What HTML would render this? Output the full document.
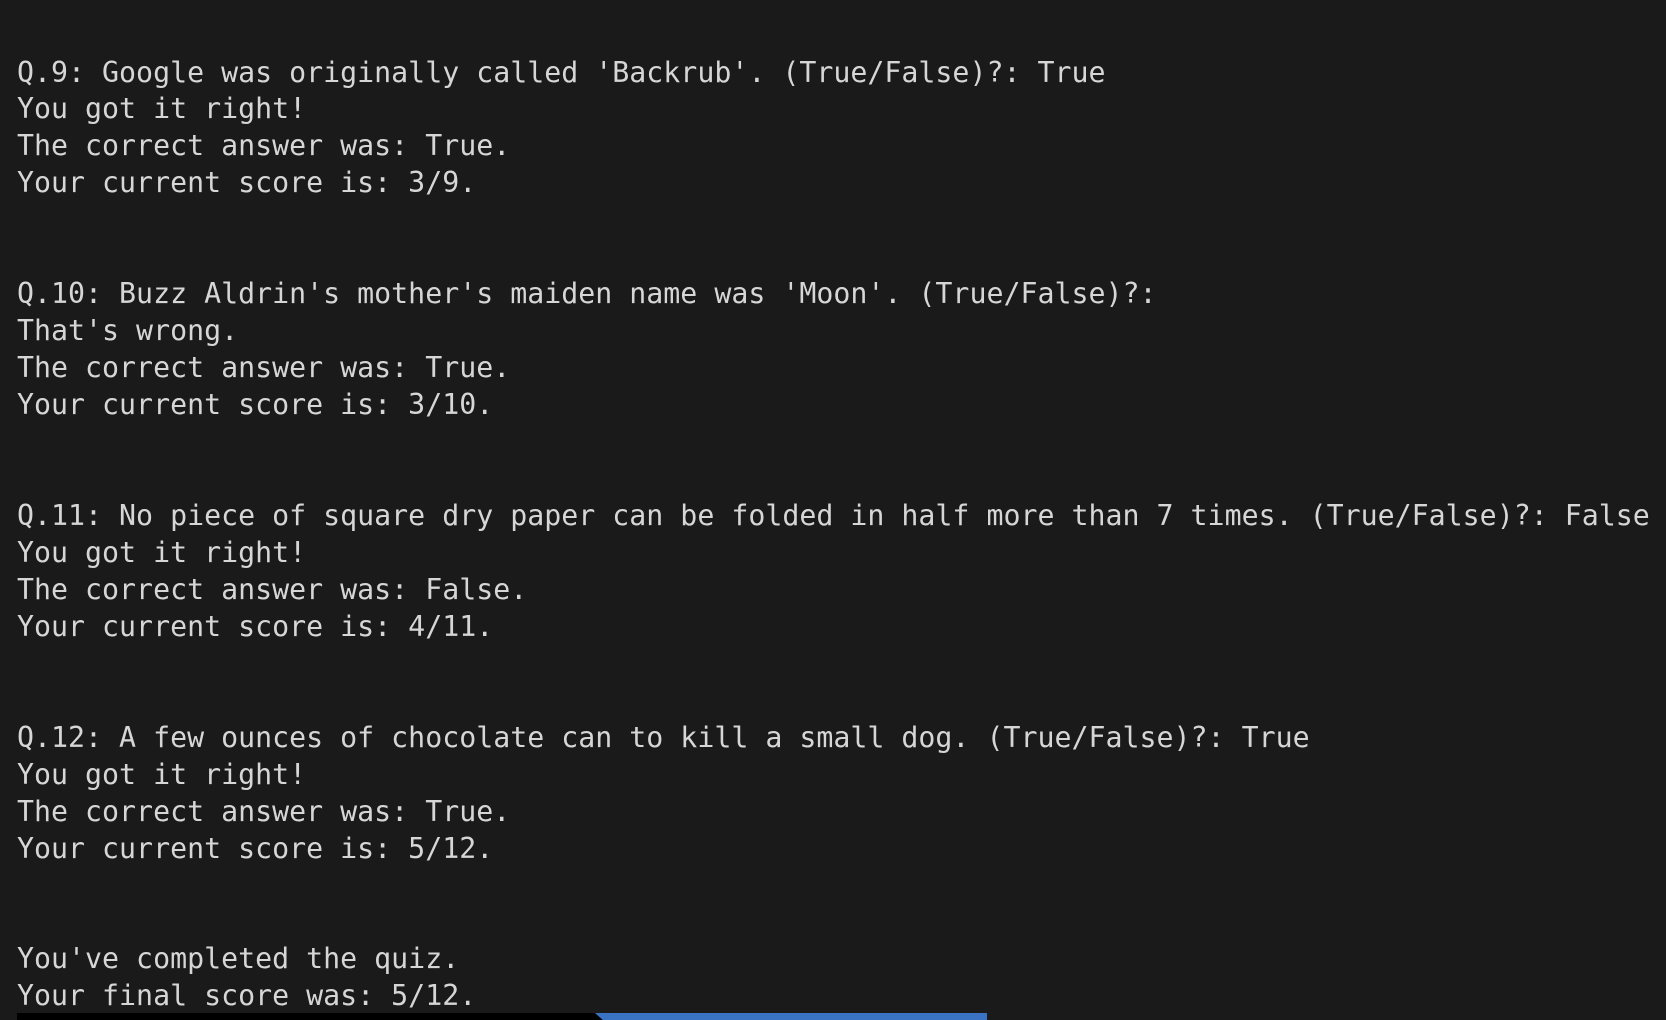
<!DOCTYPE html>
<html><head><meta charset="utf-8"><style>
html,body{margin:0;padding:0;background:#1a1a1a;width:1666px;height:1020px;overflow:hidden;position:relative}
pre{position:absolute;left:17px;top:54.5px;margin:0;font-family:"DejaVu Sans Mono","Liberation Mono",monospace;font-size:28.25px;line-height:36.95px;color:#d6d6d6;white-space:pre}
.b1{position:absolute;left:17px;top:1013px;width:600px;height:7px;background:#000}
.b2{position:absolute;left:595px;top:1013px;width:392px;height:7px;background:#3a72c4;clip-path:polygon(0 0,100% 0,100% 100%,2% 100%)}
</style></head><body>
<pre>Q.9: Google was originally called 'Backrub'. (True/False)?: True
You got it right!
The correct answer was: True.
Your current score is: 3/9.


Q.10: Buzz Aldrin's mother's maiden name was 'Moon'. (True/False)?:
That's wrong.
The correct answer was: True.
Your current score is: 3/10.


Q.11: No piece of square dry paper can be folded in half more than 7 times. (True/False)?: False
You got it right!
The correct answer was: False.
Your current score is: 4/11.


Q.12: A few ounces of chocolate can to kill a small dog. (True/False)?: True
You got it right!
The correct answer was: True.
Your current score is: 5/12.


You've completed the quiz.
Your final score was: 5/12.</pre>
<div class="b1"></div><div class="b2"></div>
</body></html>
